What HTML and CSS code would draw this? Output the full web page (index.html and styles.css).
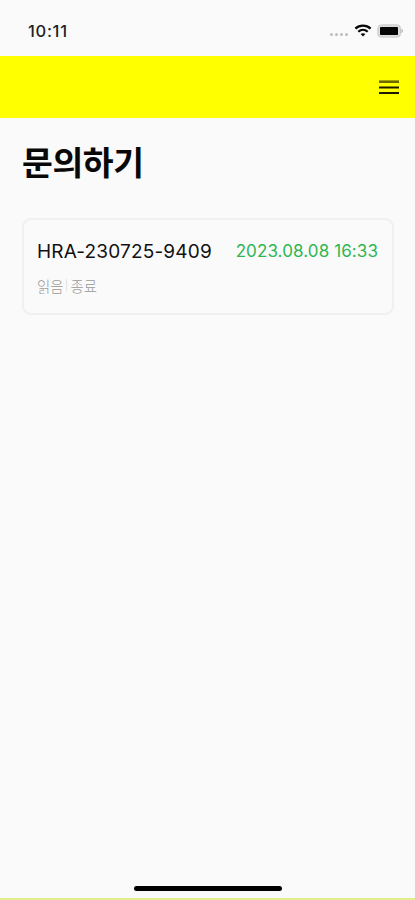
FILE: index.html
```html
<!DOCTYPE html>
<html lang="ko">
<head>
<meta charset="utf-8">
<meta name="viewport" content="width=device-width, initial-scale=1">
<title>문의하기</title>
<link rel="stylesheet" href="styles.css">
</head>
<body>
<div class="screen">
  <header class="status">
    <span class="time">10:11</span>
    <div class="indicators">
      <span class="signal"><i></i><i></i><i></i><i></i></span>
      <svg class="wifi" width="18" height="13" viewBox="0 0 18 13" fill="none" stroke="#080808" stroke-width="2.2">
        <path d="M1.4 4.6C5.6.6 12.4.6 16.6 4.6"/>
        <path d="M4.3 7.8C7 5.3 11 5.3 13.7 7.8"/>
        <path d="M6.6 10.1Q9 8.4 11.4 10.1L9 12.4Z" fill="#080808" stroke="none"/>
      </svg>
      <svg class="battery" width="27" height="14" viewBox="0 0 27 14">
        <rect x=".9" y=".9" width="22.6" height="12.2" rx="3.4" fill="#dedede" stroke="#c8c8c8"/>
        <rect x="3" y="2.9" width="18" height="8.2" rx=".8" fill="#050505"/>
        <path d="M24.6 4.8Q26.6 7 24.6 9.2Z" fill="#888"/>
      </svg>
    </div>
  </header>
  <nav class="bar">
    <button class="menu" aria-label="메뉴">
      <svg width="20" height="15" viewBox="0 0 20 15">
        <path d="M0 1.7H20" stroke="#6b6900" stroke-width="2.6"/>
        <path d="M0 7.5H20M0 13H20" stroke="#1c1b00" stroke-width="2.1"/>
      </svg>
    </button>
  </nav>
  <main class="content">
    <h1 class="title">문의하기</h1>
    <article class="ticket">
      <div class="row">
        <span class="number">HRA-230725-9409</span>
        <time class="date">2023.08.08 16:33</time>
      </div>
      <div class="state"><span>읽음</span><span class="divider"></span><span>종료</span></div>
    </article>
  </main>
  <footer class="home"><span class="handle"></span></footer>
</div>
</body>
</html>
```
FILE: styles.css
```css
* { box-sizing: border-box; }
body {
  margin: 0;
  background: #fafafa;
  color: #111;
  font-family: Inter, "Noto Sans CJK KR", sans-serif;
}
.screen {
  display: flex;
  flex-direction: column;
  height: 900px;
  border-bottom: 2px solid #e4ed8b;
}
.status {
  display: flex;
  justify-content: space-between;
  height: 56px;
  padding: 20px 11px 0 28px;
}
.time {
  font-size: 16.5px;
  line-height: 22px;
  font-weight: 500;
  letter-spacing: 0.7px;
  color: #222;
}
.indicators { display: flex; align-items: flex-start; padding-top: 4px; }
.signal { display: flex; gap: 2px; margin: 9px 6px 0 0; }
.signal i { width: 3px; height: 3px; border-radius: 50%; background: #bdbdbd; }
.wifi { margin-right: 5px; }
.bar {
  display: flex;
  align-items: center;
  justify-content: flex-end;
  height: 62px;
  padding-right: 16px;
  background: #ff0;
}
.menu { display: flex; padding: 0; border: 0; background: none; }
.content { flex: 1; padding: 20px 21px 0 22px; }
.title {
  height: 48px;
  margin: 0;
  font-family: "Noto Sans CJK KR", sans-serif;
  font-size: 33.5px;
  line-height: 46px;
  font-weight: 700;
  letter-spacing: -0.4px;
  white-space: nowrap;
  color: #080808;
}
.ticket {
  height: 97px;
  margin-top: 32px;
  padding: 18px 14px 0 13px;
  border: 2px solid #f0f0f0;
  border-radius: 9px;
}
.row { display: flex; justify-content: space-between; align-items: center; height: 26px; white-space: nowrap; }
.number { font-size: 19px; letter-spacing: 0.17px; }
.date { font-size: 17px; letter-spacing: 0.1px; color: #2fb652; }
.state {
  display: flex;
  align-items: center;
  height: 20px;
  margin-top: 11px;
  font-family: "Noto Sans CJK KR", sans-serif;
  font-size: 14.4px;
  font-weight: 300;
  color: #999;
}
.divider { width: 1px; height: 12px; margin: 0 3px; background: #e4e4e4; }
.home { display: flex; justify-content: center; height: 14px; }
.handle { width: 148px; height: 5px; margin-top: 2px; border-radius: 3px; background: #000; }
```
